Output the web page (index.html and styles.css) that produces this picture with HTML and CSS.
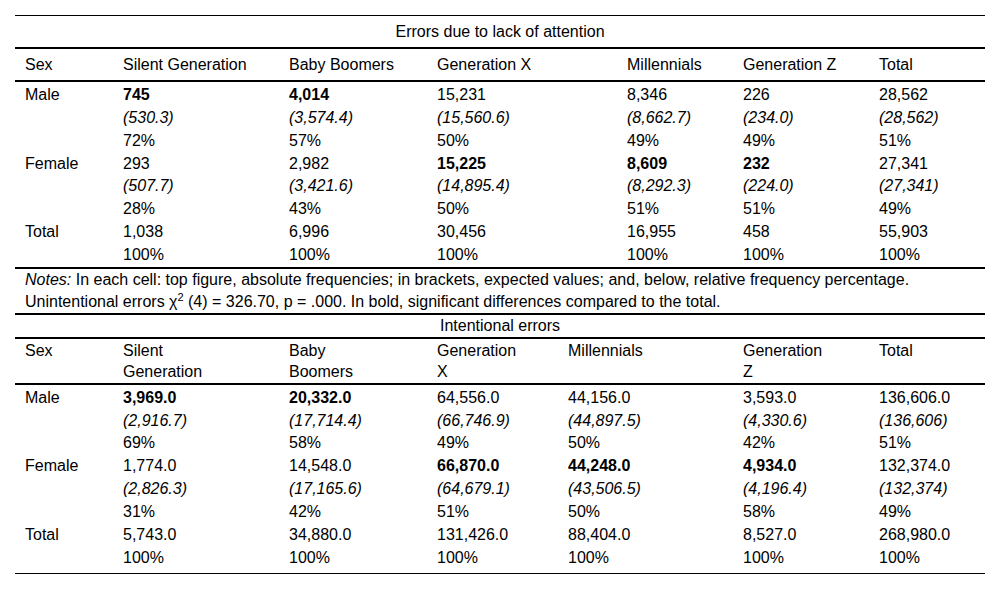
FILE: index.html
```html
<!DOCTYPE html>
<html>
<head>
<meta charset="utf-8">
<link rel="stylesheet" href="styles.css">
</head>
<body>
<div class="page">
  <table class="t t1">
    <colgroup>
      <col class="c1"><col class="c2"><col class="c3"><col class="c4a"><col class="c5a"><col class="c6"><col class="c7">
    </colgroup>
    <tr class="title"><td colspan="7">Errors due to lack of attention</td></tr>
    <tr class="head"><td>Sex</td><td>Silent Generation</td><td>Baby Boomers</td><td>Generation X</td><td>Millennials</td><td>Generation Z</td><td>Total</td></tr>
    <tr class="grp first">
      <td>Male</td>
      <td><b>745</b><br><i>(530.3)</i><br>72%</td>
      <td><b>4,014</b><br><i>(3,574.4)</i><br>57%</td>
      <td>15,231<br><i>(15,560.6)</i><br>50%</td>
      <td>8,346<br><i>(8,662.7)</i><br>49%</td>
      <td>226<br><i>(234.0)</i><br>49%</td>
      <td>28,562<br><i>(28,562)</i><br>51%</td>
    </tr>
    <tr class="grp">
      <td>Female</td>
      <td>293<br><i>(507.7)</i><br>28%</td>
      <td>2,982<br><i>(3,421.6)</i><br>43%</td>
      <td><b>15,225</b><br><i>(14,895.4)</i><br>50%</td>
      <td><b>8,609</b><br><i>(8,292.3)</i><br>51%</td>
      <td><b>232</b><br><i>(224.0)</i><br>51%</td>
      <td>27,341<br><i>(27,341)</i><br>49%</td>
    </tr>
    <tr class="grp last">
      <td>Total</td>
      <td>1,038<br>100%</td>
      <td>6,996<br>100%</td>
      <td>30,456<br>100%</td>
      <td>16,955<br>100%</td>
      <td>458<br>100%</td>
      <td>55,903<br>100%</td>
    </tr>
  </table>
  <div class="notes"><i>Notes:</i> In each cell: top figure, absolute frequencies; in brackets, expected values; and, below, relative frequency percentage.<br>Unintentional errors χ<sup>2</sup> (4) = 326.70, p = .000. In bold, significant differences compared to the total.</div>
  <table class="t t2">
    <colgroup>
      <col class="c1"><col class="c2"><col class="c3"><col class="c4b"><col class="c5b"><col class="c6"><col class="c7">
    </colgroup>
    <tr class="title"><td colspan="7">Intentional errors</td></tr>
    <tr class="head"><td>Sex</td><td>Silent<br>Generation</td><td>Baby<br>Boomers</td><td>Generation<br>X</td><td>Millennials</td><td>Generation<br>Z</td><td>Total</td></tr>
    <tr class="grp first">
      <td>Male</td>
      <td><b>3,969.0</b><br><i>(2,916.7)</i><br>69%</td>
      <td><b>20,332.0</b><br><i>(17,714.4)</i><br>58%</td>
      <td>64,556.0<br><i>(66,746.9)</i><br>49%</td>
      <td>44,156.0<br><i>(44,897.5)</i><br>50%</td>
      <td>3,593.0<br><i>(4,330.6)</i><br>42%</td>
      <td>136,606.0<br><i>(136,606)</i><br>51%</td>
    </tr>
    <tr class="grp">
      <td>Female</td>
      <td>1,774.0<br><i>(2,826.3)</i><br>31%</td>
      <td>14,548.0<br><i>(17,165.6)</i><br>42%</td>
      <td><b>66,870.0</b><br><i>(64,679.1)</i><br>51%</td>
      <td><b>44,248.0</b><br><i>(43,506.5)</i><br>50%</td>
      <td><b>4,934.0</b><br><i>(4,196.4)</i><br>58%</td>
      <td>132,374.0<br><i>(132,374)</i><br>49%</td>
    </tr>
    <tr class="grp last">
      <td>Total</td>
      <td>5,743.0<br>100%</td>
      <td>34,880.0<br>100%</td>
      <td>131,426.0<br>100%</td>
      <td>88,404.0<br>100%</td>
      <td>8,527.0<br>100%</td>
      <td>268,980.0<br>100%</td>
    </tr>
  </table>
</div>
</body>
</html>
```

FILE: styles.css
```css
html, body {
  margin: 0;
  padding: 0;
  background: #fff;
}
.page {
  padding: 15px 15px 0 15px;
  font-family: "Liberation Sans", Arial, sans-serif;
  font-size: 16px;
  line-height: 23px;
  color: #000;
}
.t {
  width: 970px;
  border-collapse: separate;
  border-spacing: 0;
  table-layout: fixed;
}
.t td {
  padding: 0 10px;
  vertical-align: top;
  text-align: left;
}
.t .grp td {
  line-height: 22.85px;
}
.t .grp.first td {
  padding-top: 2px;
}
.c1 { width: 98px; }
.c2 { width: 166px; }
.c3 { width: 148px; }
.c4a { width: 190px; }
.c5a { width: 116px; }
.c4b { width: 131px; }
.c5b { width: 175px; }
.c6 { width: 136px; }
.c7 { width: 116px; }

.t1 .title td {
  border-top: 1px solid #000;
  border-bottom: 2px solid #000;
  padding-top: 4px;
  padding-bottom: 4px;
  text-align: center;
}
.t1 .head td {
  border-bottom: 2px solid #000;
  padding-top: 4px;
  padding-bottom: 4px;
}
.t1 .grp.last td {
  border-bottom: 2px solid #000;
  padding-bottom: 0;
}
.notes {
  padding: 0 10px;
  line-height: 22px;
  border-bottom: 2px solid #000;
}
.notes sup {
  font-size: 11px;
  line-height: 0;
  vertical-align: 6px;
}
.t2 .title td {
  border-bottom: 2px solid #000;
  line-height: 22px;
  text-align: center;
}
.t2 .head td {
  border-bottom: 2px solid #000;
  line-height: 21px;
  padding-top: 1px;
  padding-bottom: 1px;
}
.t2 .grp.last td {
  border-bottom: 1px solid #000;
  padding-bottom: 3px;
}
```
